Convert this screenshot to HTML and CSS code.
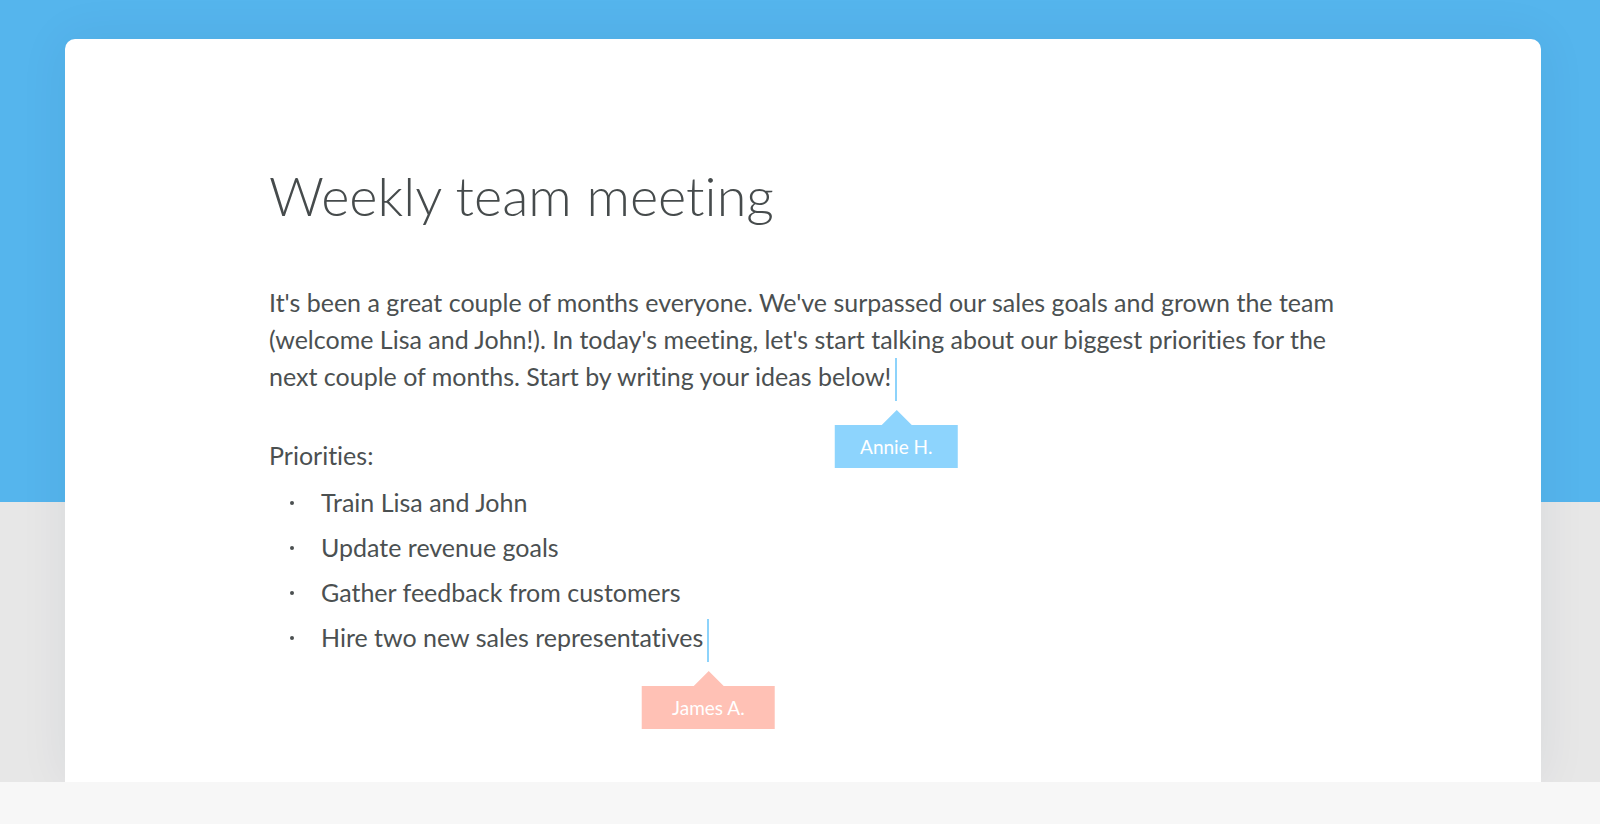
FILE: index.html
```html
<!DOCTYPE html>
<html lang="en">
<head>
  <meta charset="UTF-8" />
  <meta name="viewport" content="width=device-width, initial-scale=1.0"/>
  <title>Weekly team meeting</title>
  <link rel="stylesheet" href="styles.css">
</head>
<body>

  <div class="stage">
    <main class="doc">
      <h1>Weekly team meeting</h1>

      <p class="intro">
        It's been a great couple of months everyone. We've surpassed our sales goals and grown the team
        (welcome Lisa and John!). In today's meeting, let's start talking about our biggest priorities for the
        next couple of months. Start by writing your ideas below!<span class="caret"><span class="tag tag-annie">Annie H.</span></span>
      </p>

      <p class="label">Priorities:</p>
      <ul class="lista">
        <li>Train Lisa and John</li>
        <li>Update revenue goals</li>
        <li>Gather feedback from customers</li>
        <li>Hire two new sales representatives<span class="caret"><span class="tag tag-james">James A.</span></span></li>
      </ul>
    </main>
  </div>

  <footer class="rodape"></footer>

</body>
</html>
```

FILE: styles.css
```css
body {
  font-family: 'Lato', 'Liberation Sans', sans-serif;
  font-variant-ligatures: none;
  color: #4b5051;
  margin: 0;
  padding: 0;
  background-color: #f7f7f7;
}

.stage {
  height: 782px;
  padding-top: 39px;
  box-sizing: border-box;
  background: linear-gradient(to bottom, #55b5ed 0, #55b5ed 502px, #e7e7e7 502px);
  overflow: hidden;
}

.doc {
  margin-left: 65px;
  width: 1476px;
  height: 100%;
  box-sizing: border-box;
  background-color: #fff;
  border-radius: 10px 10px 0 0;
  box-shadow: 0 0 50px rgba(0, 40, 80, 0.07);
  padding: 125px 200px 0 204px;
}

h1 {
  font-size: 54px;
  font-weight: 300;
  color: #464b4c;
  margin: 0 0 55px;
  line-height: 1.2;
}

.intro {
  font-size: 25px;
  line-height: 37px;
  margin: 0 0 36px;
  max-width: 1080px;
}

.label {
  font-size: 25px;
  line-height: 37px;
  margin: 0 0 6px;
}

.lista {
  list-style: none;
  margin: 0;
  padding: 0 0 0 52px;
  font-size: 25px;
}

.lista li {
  position: relative;
  line-height: 45px;
}

.lista li::before {
  content: "";
  position: absolute;
  left: -31px;
  top: 21px;
  width: 4px;
  height: 4px;
  border-radius: 50%;
  background-color: #4b5051;
}

.caret {
  display: inline-block;
  position: relative;
  width: 2px;
  height: 43px;
  margin-left: 4px;
  vertical-align: middle;
  background-color: #8dd3fb;
}

.tag {
  position: absolute;
  top: 67px;
  left: 50%;
  transform: translateX(-50%);
  height: 43px;
  line-height: 43px;
  padding: 0 25px;
  color: #fff;
  font-size: 19px;
  white-space: nowrap;
}

.tag::before {
  content: "";
  position: absolute;
  left: 50%;
  top: -15px;
  margin-left: -15px;
  border-left: 15px solid transparent;
  border-right: 15px solid transparent;
  border-bottom: 15px solid;
}

.tag-annie {
  background-color: #8dd4fd;
}

.tag-annie::before {
  border-bottom-color: #8dd4fd;
}

.tag-james {
  background-color: #ffc1b5;
  padding: 0 30px;
}

.tag-james::before {
  border-bottom-color: #ffc1b5;
}

.rodape {
  height: 42px;
  background-color: #f7f7f7;
}
```
